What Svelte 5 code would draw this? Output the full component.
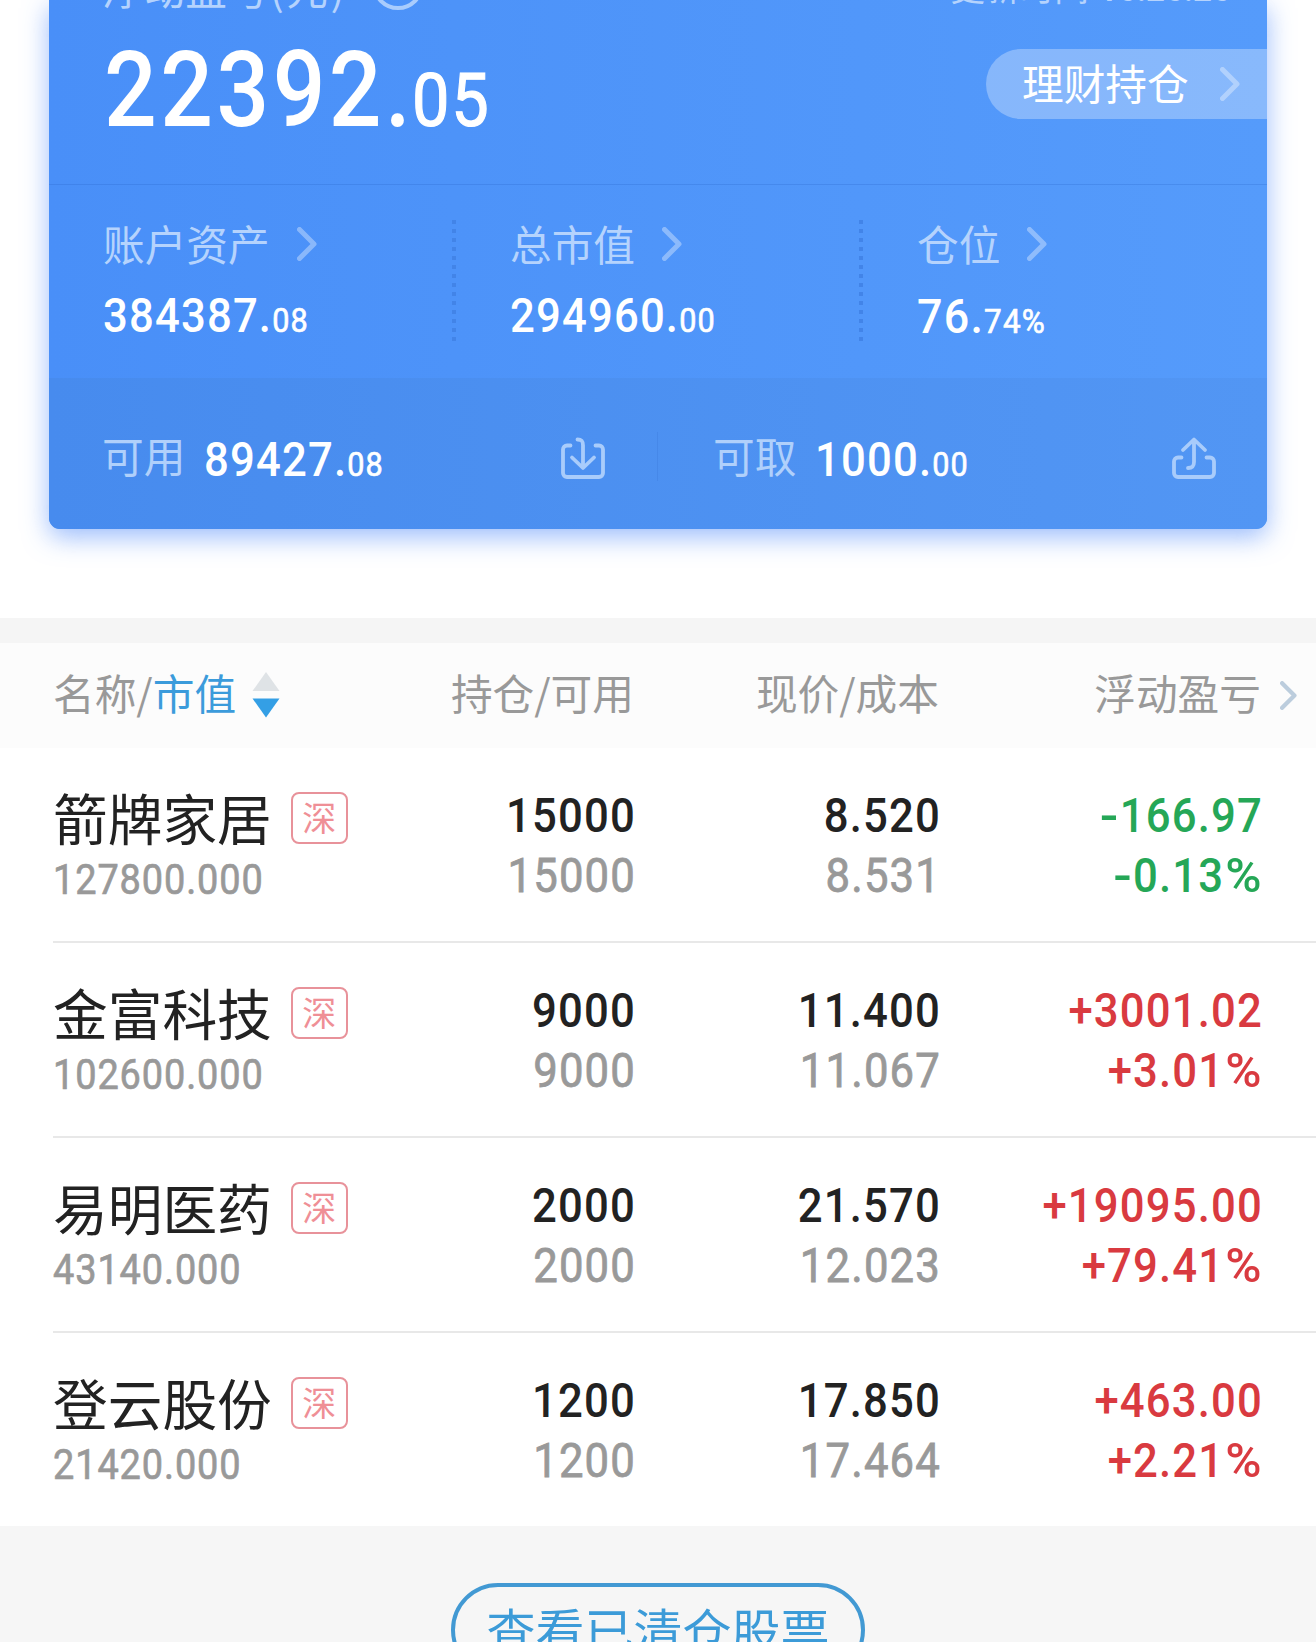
<script>
  const stats = [
    { label: '账户资产', int: '384387.', dec: '08' },
    { label: '总市值', int: '294960.', dec: '00' },
    { label: '仓位', int: '76.', dec: '74%' }
  ];
  const holdings = [
    { name: '箭牌家居', value: '127800.000', held: '15000', free: '15000', price: '8.520', cost: '8.531', pl: '-166.97', pct: '-0.13%' },
    { name: '金富科技', value: '102600.000', held: '9000', free: '9000', price: '11.400', cost: '11.067', pl: '+3001.02', pct: '+3.01%' },
    { name: '易明医药', value: '43140.000', held: '2000', free: '2000', price: '21.570', cost: '12.023', pl: '+19095.00', pct: '+79.41%' },
    { name: '登云股份', value: '21420.000', held: '1200', free: '1200', price: '17.850', cost: '17.464', pl: '+463.00', pct: '+2.21%' }
  ];
</script>

{#snippet chevron()}
  <svg class="chevron" width="20" height="34" viewBox="0 0 20 34"><path d="M2.5 2.5 17 17 2.5 31.5" /></svg>
{/snippet}

<main>
  <section class="card">
    <div class="top">
      <div class="caption">
        <span class="cap-label">浮动盈亏<span class="unit">(元)</span></span>
        <svg class="eye" width="52" height="52" viewBox="0 0 52 52"><circle cx="26" cy="26" r="24" /></svg>
        <span class="time">更新时间 <b>16:26:26</b></span>
      </div>
      <div class="total-row">
        <div class="total"><span>22392.</span><small>05</small></div>
        <div class="pill"><span>理财持仓</span>{@render chevron()}</div>
      </div>
    </div>
    <div class="stats">
      {#each stats as s}
        <div class="stat">
          <div class="stat-label"><span>{s.label}</span>{@render chevron()}</div>
          <div class="num">{s.int}<small>{s.dec}</small></div>
        </div>
      {/each}
    </div>
    <div class="funds">
      <div class="fund">
        <span class="fund-label">可用</span>
        <div class="num">89427.<small>08</small></div>
        <svg class="io" width="44" height="44" viewBox="0 0 44 44">
          <path d="M9.500 9.500H6a4 4 0 0 0-4 4V37a4 4 0 0 0 4 4h32a4 4 0 0 0 4-4V13.500a4 4 0 0 0-4-4h-3.500" />
          <path d="M16.500 3.500c4 0 5.500 1.500 5.500 6V31M11 21.500 22 32l11-10.500" />
        </svg>
      </div>
      <div class="fund second">
        <span class="fund-label">可取</span>
        <div class="num">1000.<small>00</small></div>
        <svg class="io" width="44" height="44" viewBox="0 0 44 44">
          <path d="M9.500 21.500H6a4 4 0 0 0-4 4V37a4 4 0 0 0 4 4h32a4 4 0 0 0 4-4V25.500a4 4 0 0 0-4-4h-3.500" />
          <path d="M16 32c4 0 6-1.500 6-6V4M11 14 22 3.500 33 14" />
        </svg>
      </div>
    </div>
  </section>

  <section class="table">
    <div class="thead">
      <div class="c1">名称/<em>市值</em>
        <svg class="sort" width="28" height="46" viewBox="0 0 28 46"><path d="M14 0 27.500 19H.5z" fill="#dfe3e6" /><path d="M.5 26.500h27L14 45.500z" fill="#349fe5" /></svg>
      </div>
      <div class="c2">持仓/可用</div>
      <div class="c3">现价/成本</div>
      <div class="c4">浮动盈亏</div>
      {@render chevron()}
    </div>
    {#each holdings as h}
      <div class="row">
        <div class="c1">
          <div class="name"><span>{h.name}</span><i class="badge">深</i></div>
          <div class="value">{h.value}</div>
        </div>
        <div class="c2 pair"><span>{h.held}</span><span class="sub">{h.free}</span></div>
        <div class="c3 pair"><span>{h.price}</span><span class="sub">{h.cost}</span></div>
        <div class="c4 pair" class:down={h.pl.startsWith('-')} class:up={h.pl.startsWith('+')}>
          <span><i class="sign">{h.pl[0]}</i>{h.pl.slice(1)}</span>
          <span><i class="sign">{h.pct[0]}</i>{h.pct.slice(1, -1)}<i class="percent">%</i></span>
        </div>
      </div>
    {/each}
  </section>

  <footer><button>查看已清仓股票</button></footer>
</main>

<style>
  :global(body) { margin: 0; background: #fff; }
  main {
    width: 1316px;
    height: 1642px;
    overflow: hidden;
    box-sizing: border-box;
    display: flex;
    flex-direction: column;
    font-family: "Noto Sans CJK SC", sans-serif;
    font-size: 41.700px;
    background: #fff;
  }
  .card {
    flex: none;
    height: 529px;
    margin: 0 49px 89px;
    border-radius: 0 0 11px 11px;
    background: linear-gradient(90deg, #498ff8, #559bfb);
    box-shadow: 0 8px 26px rgba(64, 126, 250, 0.52);
    color: #fff;
    display: flex;
    flex-direction: column;
  }
  .top { height: 185px; box-sizing: border-box; border-bottom: 1px solid rgba(30, 90, 190, 0.22); }
  .caption { display: flex; align-items: center; height: 40px; margin-top: -32px; padding: 0 36px 0 53px; color: #b5d3fd; }
  .cap-label { line-height: 40px; margin-bottom: 3px; white-space: nowrap; }
  .unit { margin-left: 1px; letter-spacing: 2.500px; }
  .eye { flex: none; margin: 0 0 8px 25px; fill: none; stroke: #a9ccfd; stroke-width: 4; }
  .time { margin-left: auto; font-size: 34.700px; line-height: 40px; white-space: nowrap; }
  .time b { margin-left: 2px; font: 700 33px/40px Roboto, sans-serif; }
  .total-row { display: flex; justify-content: space-between; margin-top: 41px; }
  .total { display: flex; align-items: baseline; height: 78px; padding-left: 55px; font: 500 106px/82px Roboto, sans-serif; }
  .total span { width: 308px; letter-spacing: 4px; transform: scaleX(0.875); transform-origin: left; }
  .total small { font-size: 75px; font-weight: 400; line-height: 70px; letter-spacing: 2px; -webkit-text-stroke: 1.200px; transform: scaleX(0.89); transform-origin: left; }
  .pill {
    display: flex; align-items: center; box-sizing: border-box;
    width: 281px; height: 70px; padding-left: 36px;
    border-radius: 35px 0 0 35px; background: rgba(255, 255, 255, 0.3);
  }
  .pill span { line-height: 60px; margin-bottom: 4px; }
  .pill .chevron { margin-left: 31px; }
  .chevron { flex: none; fill: none; stroke: rgba(255, 255, 255, 0.35); stroke-width: 5; stroke-linecap: round; stroke-linejoin: round; }
  .stats { display: grid; grid-template-columns: 407px 407px 1fr; height: 193px; }
  .stat { position: relative; padding: 32px 0 0 54px; }
  .stat:not(:last-child)::after {
    content: ""; position: absolute; left: 403px; top: 35px; width: 4px; height: 121px;
    background: repeating-linear-gradient(#4284e8 0 4px, transparent 4px 9px);
  }
  .stat-label { display: flex; align-items: center; height: 54px; color: #b5d3fd; }
  .stat-label span { line-height: 54px; margin-bottom: 3px; }
  .stat-label .chevron { margin-left: 27px; }
  .num {
    height: 56px; white-space: nowrap; font: 500 48.500px/56px Roboto, sans-serif;
    letter-spacing: 1.300px; transform: scaleX(0.9); transform-origin: left;
  }
  .num small { font-size: 34px; font-weight: 400; -webkit-text-stroke: 0.700px; }
  .stat .num { margin-top: 17px; }
  .stat:last-child .num { transform: scaleX(0.925); margin-top: 18px; }
  .funds { display: grid; grid-template-columns: 608px 1fr; height: 151px; border-radius: 0 0 11px 11px; background: linear-gradient(90deg, #478bee, #5296f4); }
  .fund { display: flex; align-items: center; padding: 11px 52px 0 53px; position: relative; }
  .fund-label { color: #b0d0fb; line-height: 50px; margin: 0 19px 8px 0; }
  .fund .num { margin-top: 1px; }
  .second { padding: 11px 51px 0 56px; }
  .second::before { content: ""; position: absolute; left: 0; top: 54px; width: 1px; height: 49px; background: rgba(50, 110, 210, 0.25); }
  .io { margin: 0 0 2px auto; fill: none; stroke: #a9ccfb; stroke-width: 3.800; stroke-linecap: round; stroke-linejoin: round; }

  .table { flex: none; border-top: 25px solid #f5f5f5; }
  .thead, .row { display: grid; grid-template-columns: 328px 253px 305px 322px 1fr; padding-left: 53px; }
  .thead { height: 105px; align-items: center; background: #fcfcfc; color: #999; line-height: 60px; }
  .thead > div { margin-bottom: 8px; white-space: nowrap; }
  .thead .chevron { width: 17px; height: 29px; margin-left: 19px; stroke: #bccddd; }
  .c1 em { font-style: normal; color: #3b9bdb; }
  .thead .c1 { display: flex; align-items: center; }
  .sort { margin: 7px 0 0 16px; }
  .c2, .c3, .c4 { text-align: right; }
  .row { height: 195px; box-sizing: border-box; }
  .row:not(:last-child) { background: linear-gradient(#e8e8e8, #e8e8e8) 53px 193px / 100% 2px no-repeat; }
  .row:last-child { height: 193px; }
  .name { display: flex; align-items: center; height: 60px; margin-top: 40px; font-size: 54.700px; color: #222; white-space: nowrap; }
  .name span { line-height: 60px; margin-bottom: 3px; }
  .badge {
    box-sizing: border-box; width: 57px; height: 52px; margin-left: 19px;
    border: 2px solid #e8929a; border-radius: 8px; color: #ef8f96;
    font-size: 34px; font-style: normal; line-height: 46px; text-align: center;
  }
  .value { height: 40px; margin-top: 12px; color: #999; font: 400 42.500px/40px Roboto, sans-serif; letter-spacing: 1px; -webkit-text-stroke: 0.700px; transform: scaleX(0.892); transform-origin: left; }
  .pair {
    display: flex; flex-direction: column; padding-top: 38px; margin-right: -2px;
    color: #222; font: 500 48.500px/60px Roboto, sans-serif;
    letter-spacing: 1.300px; white-space: nowrap; transform: scaleX(0.9); transform-origin: right;
  }
  .sub { color: #999; font-weight: 400; -webkit-text-stroke: 0.800px; }
  .sign, .percent { display: inline-block; font-style: normal; }
  .percent { margin-left: 6px; transform: scaleX(1.13); transform-origin: right; }
  .down .sign { transform: scaleX(1.25); transform-origin: right; }
  .up { color: #d93a40; }
  .down { color: #25a757; }
  footer { flex: 1; display: flex; justify-content: center; background: #f6f6f6; padding-top: 57px; }
  button {
    flex: none; box-sizing: border-box; width: 414px; height: 94px; padding: 0 0 2px;
    border: 4px solid #4299d3; border-radius: 47px; background: none; color: #3c9bd8;
    font: 49px/80px "Noto Sans CJK SC", sans-serif; white-space: nowrap;
  }
</style>
